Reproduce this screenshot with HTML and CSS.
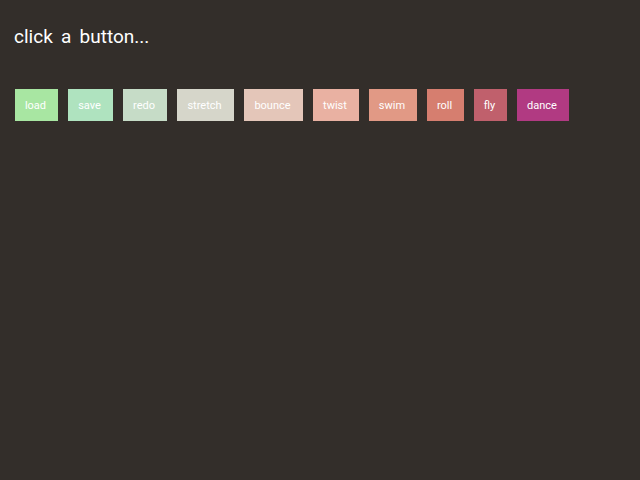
FILE: index.html
```html
<!DOCTYPE html>
<html>
<head>
<meta charset="utf-8">
<link rel="stylesheet" href="styles.css">
</head>
<body>
<h1 class="title">click a button...</h1>
<div class="buttons">
  <button class="btn b1">load</button>
  <button class="btn b2">save</button>
  <button class="btn b3">redo</button>
  <button class="btn b4">stretch</button>
  <button class="btn b5">bounce</button>
  <button class="btn b6">twist</button>
  <button class="btn b7">swim</button>
  <button class="btn b8">roll</button>
  <button class="btn b9">fly</button>
  <button class="btn b10">dance</button>
</div>
</body>
</html>
```
FILE: styles.css
```css
html, body {
  margin: 0;
  background: #332e2a;
}
body {
  padding: 23px 15px;
  font-family: Roboto, "Liberation Sans", sans-serif;
  color: #fff;
}
.title {
  margin: 0;
  font-size: 19px;
  font-weight: 400;
  line-height: 28px;
  word-spacing: 3.5px;
  margin-left: -1px;
}
.buttons {
  display: flex;
  gap: 10px;
  margin-top: 38px;
}
.btn {
  border: none;
  height: 32px;
  padding: 0 2px 0 0;
  font-family: Roboto, "Liberation Sans", sans-serif;
  font-size: 11px;
  color: #fff;
  cursor: pointer;
}
.b1 { background: #a8e6a2; width: 43px; }
.b2 { background: #afe3bf; width: 45px; }
.b3 { background: #c6dcc7; width: 44px; }
.b4 { background: #d6d6ca; width: 57px; }
.b5 { background: #e4c6b9; width: 59px; }
.b6 { background: #e9b1a2; width: 46px; }
.b7 { background: #e19985; width: 48px; }
.b8 { background: #d67e6f; width: 37px; }
.b9 { background: #c0606c; width: 33px; }
.b10 { background: #b13a82; width: 52px; }
```
